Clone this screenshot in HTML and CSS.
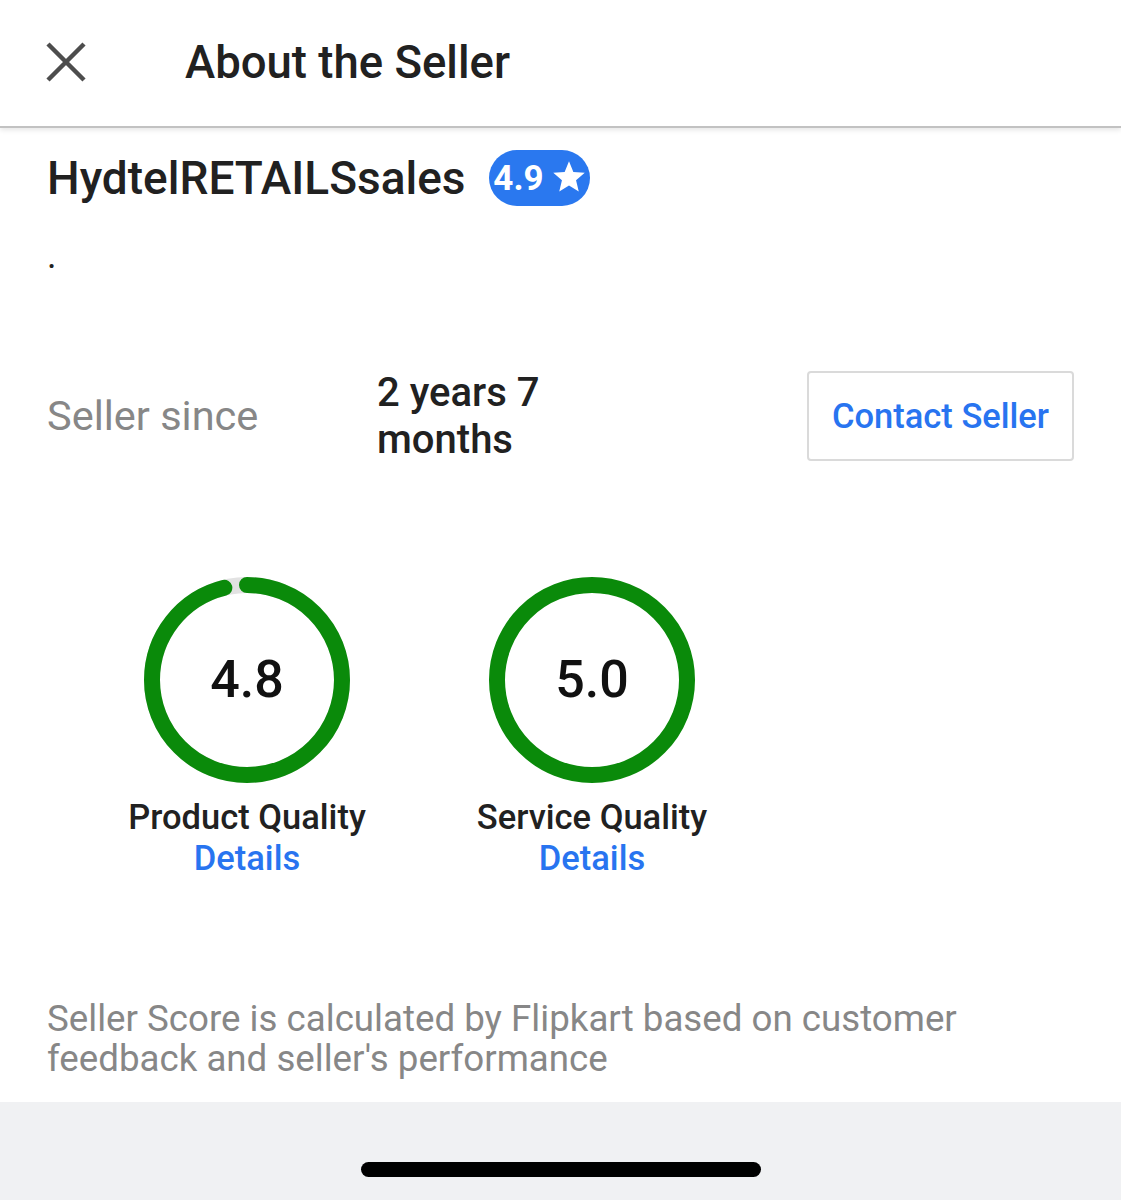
FILE: index.html
```html
<!DOCTYPE html>
<html lang="en">
<head>
<meta charset="utf-8">
<title>About the Seller</title>
<link rel="stylesheet" href="styles.css">
</head>
<body>
<div class="page">
  <header class="topbar">
    <svg class="close" viewBox="0 0 40 40" width="40" height="40" aria-hidden="true">
      <path d="M2 2 L38 38 M38 2 L2 38" stroke="#4d4d4d" stroke-width="4.5" fill="none"/>
    </svg>
    <h1 class="title">About the Seller</h1>
  </header>

  <main class="content">
    <div class="name-row">
      <span class="seller-name">HydtelRETAILSsales</span>
      <span class="badge">4.9
        <svg class="star" viewBox="0 0 24 24" width="36" height="36" aria-hidden="true">
          <path d="M12 1.5 L14.9 8.6 L22.5 9.2 L16.7 14.2 L18.5 21.7 L12 17.7 L5.5 21.7 L7.3 14.2 L1.5 9.2 L9.1 8.6 Z" fill="#fff"/>
        </svg>
      </span>
    </div>
    <div class="dot">.</div>

    <div class="since-row">
      <div class="since-label">Seller since</div>
      <div class="since-value">2 years 7 months</div>
      <button class="contact">Contact Seller</button>
    </div>

    <div class="scores">
      <div class="score">
        <div class="ring">
          <svg viewBox="0 0 206 206" width="206" height="206" aria-hidden="true">
            <circle cx="103" cy="103" r="95" fill="none" stroke="#e2e2e2" stroke-width="16"/>
            <circle cx="103" cy="103" r="95" fill="none" stroke="#0a8a0a" stroke-width="16" stroke-linecap="round" stroke-dasharray="573 600" transform="rotate(-90 103 103)"/>
          </svg>
          <span class="ring-value">4.8</span>
        </div>
        <div class="score-label">Product Quality</div>
        <div class="score-link">Details</div>
      </div>
      <div class="score">
        <div class="ring">
          <svg viewBox="0 0 206 206" width="206" height="206" aria-hidden="true">
            <circle cx="103" cy="103" r="95" fill="none" stroke="#0a8a0a" stroke-width="16"/>
          </svg>
          <span class="ring-value">5.0</span>
        </div>
        <div class="score-label">Service Quality</div>
        <div class="score-link">Details</div>
      </div>
    </div>

    <p class="note">Seller Score is calculated by Flipkart based on customer feedback and seller's performance</p>
  </main>

  <footer class="home-area">
    <div class="home-bar"></div>
  </footer>
</div>
</body>
</html>
```

FILE: styles.css
```css
* {
  box-sizing: border-box;
}

html, body {
  margin: 0;
  padding: 0;
  background: #ffffff;
}

body {
  font-family: Roboto, "Noto Sans", sans-serif;
  color: #212121;
}

.page {
  width: 1121px;
  height: 1200px;
  display: flex;
  flex-direction: column;
  overflow: hidden;
}

.topbar {
  height: 128px;
  flex: 0 0 auto;
  display: flex;
  align-items: center;
  padding-left: 46px;
  border-bottom: 2px solid #c2c2c2;
  box-shadow: 0 2px 5px rgba(0, 0, 0, 0.10);
  position: relative;
  z-index: 1;
}

.close {
  display: block;
  flex: 0 0 auto;
  margin-top: -2px;
}

.title {
  margin: 0 0 0 99px;
  font-size: 45.5px;
  font-weight: 500;
  color: #212121;
  line-height: 56px;
}

.content {
  flex: 1 1 auto;
  padding: 0 47px;
}

.name-row {
  margin-top: 22px;
  height: 56px;
  display: flex;
  align-items: center;
}

.seller-name {
  font-size: 46px;
  font-weight: 500;
  line-height: 56px;
  color: #212121;
}

.badge {
  margin-left: 23px;
  width: 101px;
  height: 56px;
  border-radius: 28px;
  background: #2a78ef;
  color: #ffffff;
  display: inline-flex;
  align-items: center;
  justify-content: center;
  gap: 7px;
  font-size: 35px;
  font-weight: 700;
  padding-left: 2px;
}

.star {
  display: block;
  margin-top: -2px;
}

.dot {
  margin-top: 30px;
  font-size: 36px;
  line-height: 40px;
  color: #212121;
}

.since-row {
  margin-top: 95px;
  height: 90px;
  display: flex;
  align-items: center;
}

.since-label {
  width: 330px;
  font-size: 41.5px;
  color: #878787;
  line-height: 46px;
}

.since-value {
  width: 220px;
  font-size: 40px;
  font-weight: 500;
  line-height: 47px;
  color: #212121;
}

.contact {
  margin-left: auto;
  width: 267px;
  height: 90px;
  background: #ffffff;
  border: 2px solid #dadada;
  border-radius: 4px;
  font-family: Roboto, "Noto Sans", sans-serif;
  font-size: 34.5px;
  font-weight: 500;
  color: #2874f0;
  padding: 0;
}

.scores {
  margin-top: 116px;
  display: flex;
  gap: 95px;
  padding-left: 75px;
}

.score {
  width: 250px;
  display: flex;
  flex-direction: column;
  align-items: center;
}

.ring {
  display: grid;
  place-items: center;
}

.ring > * {
  grid-area: 1 / 1;
}

.ring svg {
  display: block;
}

.ring-value {
  font-size: 52px;
  font-weight: 500;
  color: #111111;
  line-height: 60px;
}

.score-label {
  margin-top: 15px;
  font-size: 34.5px;
  font-weight: 500;
  line-height: 38px;
  color: #212121;
  white-space: nowrap;
}

.score-link {
  margin-top: 3px;
  font-size: 34.5px;
  font-weight: 500;
  line-height: 38px;
  color: #2874f0;
}

.note {
  margin: 122px 0 0 0;
  font-size: 36.7px;
  line-height: 40px;
  color: #878787;
}

.home-area {
  flex: 0 0 98px;
  background: #f0f1f3;
  display: flex;
  justify-content: center;
  padding-top: 60px;
}

.home-bar {
  width: 400px;
  height: 15px;
  border-radius: 8px;
  background: #000000;
}
```
